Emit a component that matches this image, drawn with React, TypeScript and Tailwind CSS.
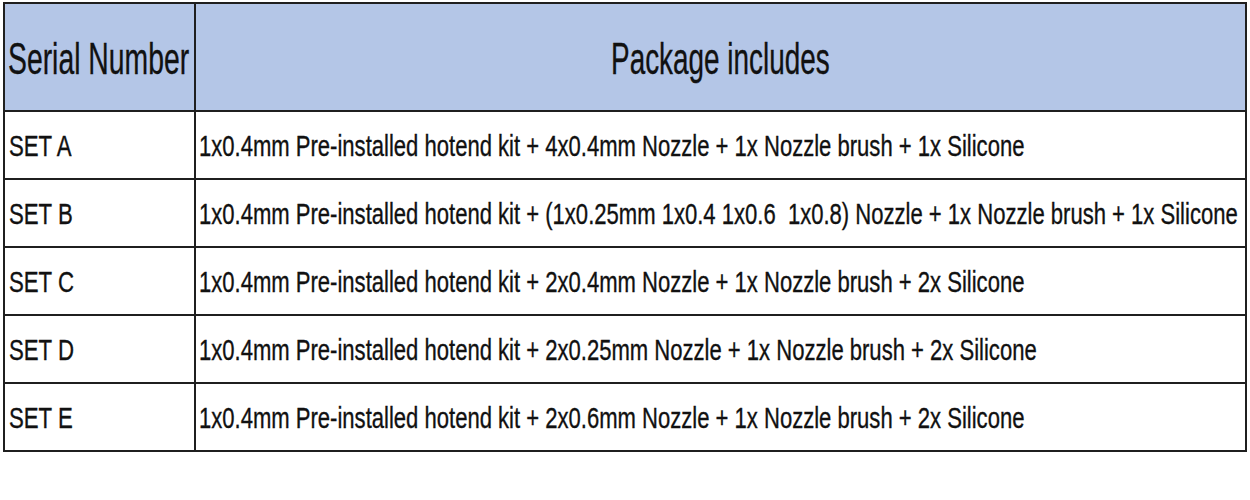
const rows = [
  { set: "SET A", items: "1x0.4mm Pre-installed hotend kit + 4x0.4mm Nozzle + 1x Nozzle brush + 1x Silicone" },
  { set: "SET B", items: "1x0.4mm Pre-installed hotend kit + (1x0.25mm 1x0.4 1x0.6\u00a0 1x0.8) Nozzle + 1x Nozzle brush + 1x Silicone" },
  { set: "SET C", items: "1x0.4mm Pre-installed hotend kit + 2x0.4mm Nozzle + 1x Nozzle brush + 2x Silicone" },
  { set: "SET D", items: "1x0.4mm Pre-installed hotend kit + 2x0.25mm Nozzle + 1x Nozzle brush + 2x Silicone" },
  { set: "SET E", items: "1x0.4mm Pre-installed hotend kit + 2x0.6mm Nozzle + 1x Nozzle brush + 2x Silicone" },
];

export default function App() {
  return (
    <div className="h-[500px] w-[1250px] bg-white pl-[3px] pt-[2px]" style={{ fontFamily: '"Liberation Sans", Arial, sans-serif' }}>
      <table className="w-[1244px] table-fixed border-collapse border-2 border-[#1f1f1f] text-[#111] [-webkit-text-stroke:0.35px_#111]">
        <colgroup>
          <col className="w-[191px]" />
          <col />
        </colgroup>
        <thead>
          <tr className="h-[108px] bg-[#b4c6e7]">
            <th className="overflow-hidden whitespace-nowrap border-2 border-[#1f1f1f] pl-[3px] pt-[3px] text-left font-normal">
              <span className="inline-block origin-left scale-x-[0.63] text-[45px] leading-none">Serial Number</span>
            </th>
            <th className="overflow-hidden whitespace-nowrap border-2 border-[#1f1f1f] pt-[3px] font-normal">
              <span className="inline-block scale-x-[0.62] text-[45px] leading-none">Package includes</span>
            </th>
          </tr>
        </thead>
        <tbody>
          {rows.map((r) => (
            <tr key={r.set} className="h-[68px]">
              <td className="overflow-hidden whitespace-nowrap border-2 border-[#1f1f1f] pl-[4px] pt-[4px]">
                <span className="inline-block origin-left scale-x-[0.74] text-[30px] leading-none">{r.set}</span>
              </td>
              <td className="overflow-hidden whitespace-nowrap border-2 border-[#1f1f1f] pl-[3px] pt-[4px]">
                <span className="inline-block origin-left scale-x-[0.735] text-[30px] leading-none">{r.items}</span>
              </td>
            </tr>
          ))}
        </tbody>
      </table>
    </div>
  );
}
